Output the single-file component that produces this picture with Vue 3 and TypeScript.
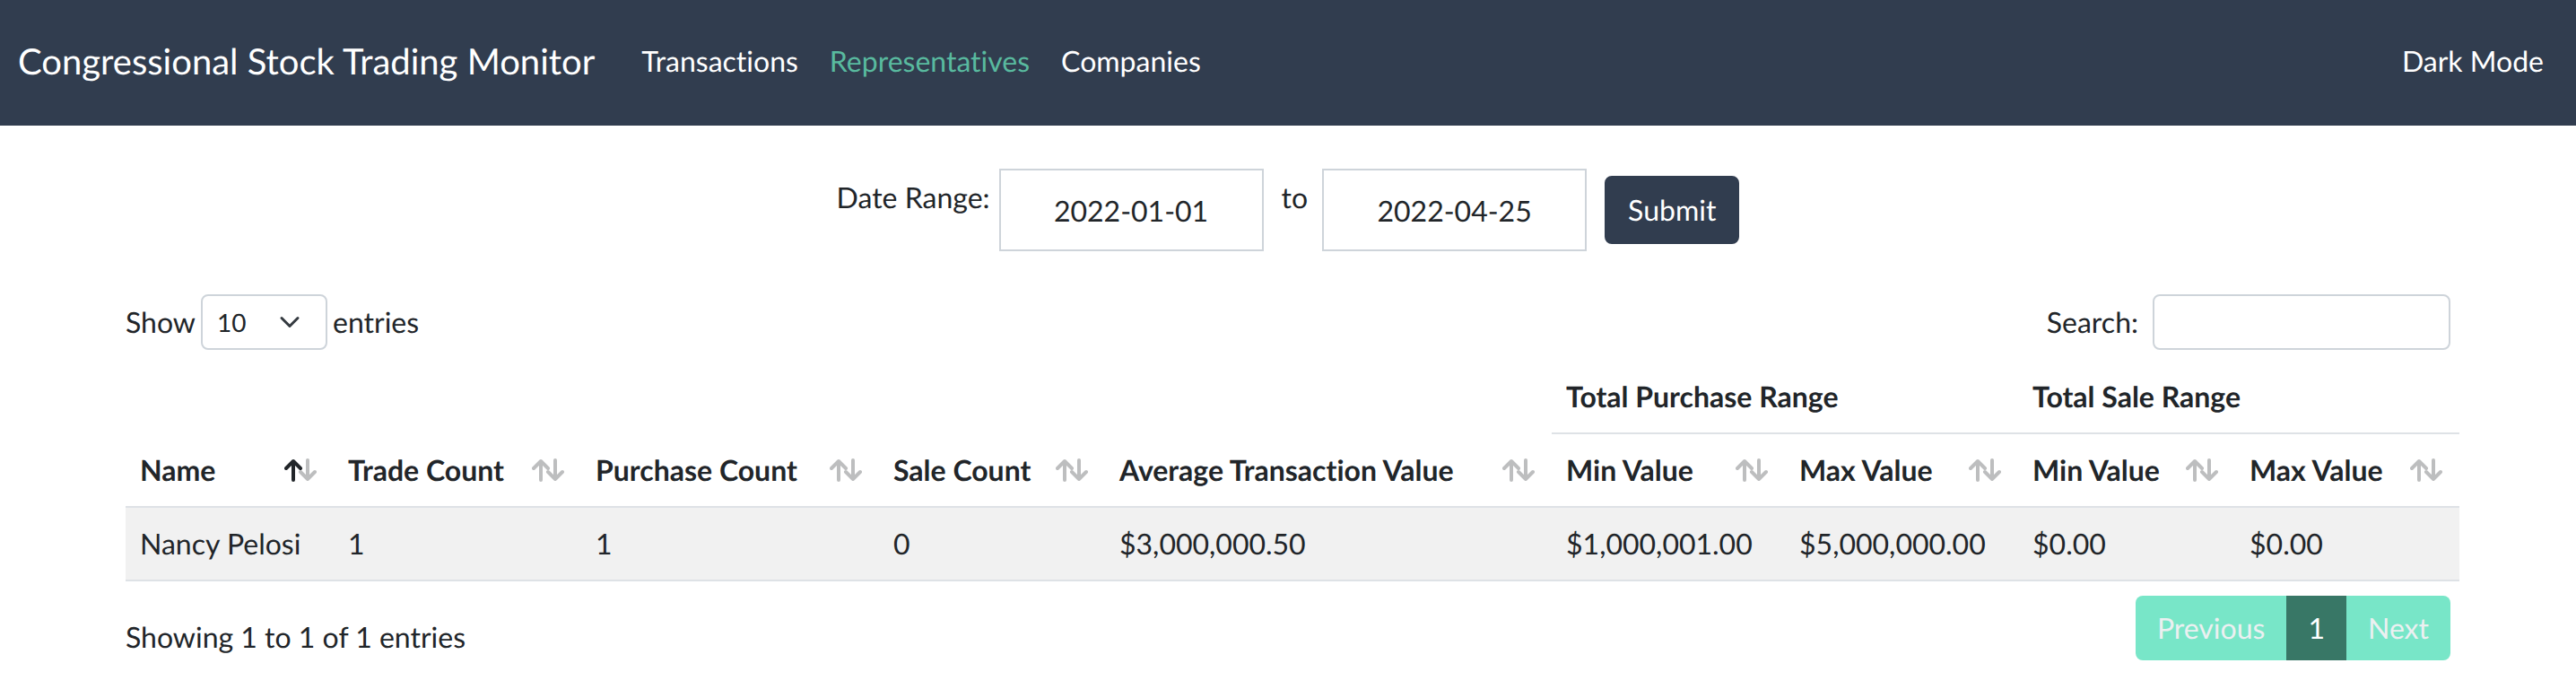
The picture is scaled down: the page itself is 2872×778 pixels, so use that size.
<script setup lang="ts">
import { ref } from 'vue'

interface Column {
  key: string
  label: string
  sorted?: boolean
}

interface Representative {
  name: string
  values: string[]
}

const navLinks = [
  { label: 'Transactions', active: false },
  { label: 'Representatives', active: true },
  { label: 'Companies', active: false },
]

const columns: Column[] = [
  { key: 'name', label: 'Name', sorted: true },
  { key: 'trades', label: 'Trade Count' },
  { key: 'purchases', label: 'Purchase Count' },
  { key: 'sales', label: 'Sale Count' },
  { key: 'average', label: 'Average Transaction Value' },
  { key: 'buy-min', label: 'Min Value' },
  { key: 'buy-max', label: 'Max Value' },
  { key: 'sell-min', label: 'Min Value' },
  { key: 'sell-max', label: 'Max Value' },
]

const rows: Representative[] = [
  {
    name: 'Nancy Pelosi',
    values: ['1', '1', '0', '$3,000,000.50', '$1,000,001.00', '$5,000,000.00', '$0.00', '$0.00'],
  },
]

const startDate = ref('2022-01-01')
const endDate = ref('2022-04-25')
const pageSize = ref('10')
const search = ref('')
</script>

<template>
  <div class="page">
    <header class="navbar">
      <a class="brand" href="#">Congressional Stock Trading Monitor</a>
      <nav class="links">
        <a
          v-for="link in navLinks"
          :key="link.label"
          href="#"
          class="link"
          :class="{ active: link.active }"
        >{{ link.label }}</a>
      </nav>
      <a class="link theme" href="#">Dark Mode</a>
    </header>

    <main class="content">
      <form class="range" @submit.prevent>
        <label class="range-label" for="start">Date Range:</label>
        <input id="start" v-model="startDate" class="date" type="text" />
        <label class="range-label to" for="end">to</label>
        <input id="end" v-model="endDate" class="date" type="text" />
        <button class="submit" type="submit">Submit</button>
      </form>

      <div class="bar tools">
        <div class="length">
          <label for="size">Show</label>
          <select id="size" v-model="pageSize" class="size">
            <option>10</option>
            <option>25</option>
            <option>50</option>
            <option>100</option>
          </select>
          <span>entries</span>
        </div>
        <div class="filter">
          <label for="search">Search:</label>
          <input id="search" v-model="search" class="search" type="search" />
        </div>
      </div>

      <table class="table">
        <colgroup>
          <col v-for="col in columns" :key="col.key" :class="'col-' + col.key" />
        </colgroup>
        <thead>
          <tr>
            <td class="blank" colspan="5"></td>
            <th colspan="2" scope="colgroup">Total Purchase Range</th>
            <th colspan="2" scope="colgroup">Total Sale Range</th>
          </tr>
          <tr>
            <th
              v-for="col in columns"
              :key="col.key"
              scope="col"
              :aria-sort="col.sorted ? 'ascending' : 'none'"
            >
              <button class="sort" type="button">
                <span>{{ col.label }}</span>
                <svg class="arrows" :class="{ asc: col.sorted }" viewBox="0 0 36 26" aria-hidden="true">
                  <path class="down" d="M26 2V23M18 15L26 23L34 15" />
                  <path class="up" d="M10 24V3M2 11L10 3L18 11" />
                </svg>
              </button>
            </th>
          </tr>
        </thead>
        <tbody>
          <tr v-for="row in rows" :key="row.name">
            <td>{{ row.name }}</td>
            <td v-for="(value, i) in row.values" :key="i">{{ value }}</td>
          </tr>
        </tbody>
      </table>

      <div class="bar footer">
        <p class="info">Showing 1 to 1 of 1 entries</p>
        <nav class="pages" aria-label="Table pages">
          <button class="page-link" type="button">Previous</button>
          <button class="page-link current" type="button" aria-current="page">1</button>
          <button class="page-link" type="button">Next</button>
        </nav>
      </div>
    </main>
  </div>
</template>

<style>
body {
  margin: 0;
  background: #fff;
}
</style>

<style scoped>
.page,
.page * {
  box-sizing: border-box;
}

.page {
  color: #212529;
  font-family: Lato, "Open Sans", sans-serif;
  font-size: 32px;
  font-variant-ligatures: none;
  line-height: 48px;
  text-rendering: geometricPrecision;
}

input,
select,
button {
  margin: 0;
  color: inherit;
  font: inherit;
  font-variant-ligatures: none;
  text-rendering: inherit;
}

a {
  color: inherit;
  text-decoration: none;
}

.navbar {
  display: flex;
  align-items: center;
  padding: 28px 20px 32px;
  background: #313d4f;
  color: #fff;
}

.brand {
  margin-right: 36px;
  font-size: 40px;
  line-height: 60px;
}

.links {
  display: flex;
  gap: 3px;
}

.link {
  padding: 16px;
}

.link.active {
  color: #59ba9f;
}

.theme {
  margin-left: auto;
}

.content {
  padding: 48px 130px 0 140px;
}

.range {
  display: flex;
  align-items: center;
  justify-content: center;
  margin-right: 10px;
}

.range-label {
  align-self: flex-start;
  margin: 8px 10px 0 0;
}

.range-label.to {
  margin: 8px 16px 0 20px;
}

.date {
  width: 295px;
  height: 92px;
  border: 2px solid #ced4da;
  border-radius: 0;
  background: #fff;
  text-align: center;
}

.submit {
  margin-left: 20px;
  padding: 12px 24px;
  border: 2px solid #313d4f;
  border-radius: 8px;
  background: #313d4f;
  color: #fff;
}

.bar {
  display: flex;
  justify-content: space-between;
  padding-right: 10px;
}

.tools {
  margin: 48px 0 12px;
}

.length,
.filter {
  display: flex;
  align-items: center;
  gap: 6px;
}

.filter {
  gap: 16px;
}

.size,
.search {
  height: 62px;
  border: 2px solid #ced4da;
  border-radius: 8px;
  background-color: #fff;
  font-size: 28px;
  line-height: 42px;
}

.size {
  width: 141px;
  padding: 8px 72px 8px 16px;
  appearance: none;
  background-image: url("data:image/svg+xml,%3Csvg xmlns='http://www.w3.org/2000/svg' viewBox='0 0 16 16'%3E%3Cpath fill='none' stroke='%23343a40' stroke-linecap='round' stroke-linejoin='round' stroke-width='2' d='M2 5l6 6 6-6'/%3E%3C/svg%3E");
  background-position: right 24px center;
  background-repeat: no-repeat;
  background-size: 32px 24px;
}

.search {
  width: 332px;
  padding: 8px 16px;
  appearance: none;
}

.table {
  width: 100%;
  border-collapse: separate;
  border-spacing: 0;
  table-layout: fixed;
}

.col-name { width: 232px; }
.col-trades { width: 276px; }
.col-purchases { width: 332px; }
.col-sales { width: 252px; }
.col-average { width: 498px; }
.col-buy-min { width: 260px; }
.col-buy-max { width: 260px; }
.col-sell-min { width: 242px; }
.col-sell-max { width: 250px; }

th,
td {
  padding: 16px;
  border-bottom: 2px solid #dee2e6;
  font-weight: 400;
  text-align: left;
  white-space: nowrap;
}

th {
  font-weight: 700;
}

.blank {
  border-bottom-color: transparent;
}

tbody td {
  background: #f1f1f1;
}

.sort {
  display: flex;
  align-items: center;
  justify-content: space-between;
  width: 100%;
  padding: 0 3px 0 0;
  border: 0;
  background: none;
}

.arrows {
  flex: none;
  width: 36px;
  height: 26px;
}

.arrows path {
  fill: none;
  stroke: #bdbebf;
  stroke-width: 4;
  stroke-linecap: round;
  stroke-linejoin: round;
}

.arrows.asc .up {
  stroke: #212529;
}

.footer {
  align-items: flex-start;
  margin-top: 16px;
}

.info {
  margin: 22px 0 0;
}

.pages {
  display: flex;
  overflow: hidden;
  border-radius: 8px;
}

.page-link {
  padding: 12px 24px;
  border: 0;
  background: #78e6c8;
  color: #ecf0f1;
}

.page-link.current {
  background: #387766;
  color: #fff;
}
</style>
